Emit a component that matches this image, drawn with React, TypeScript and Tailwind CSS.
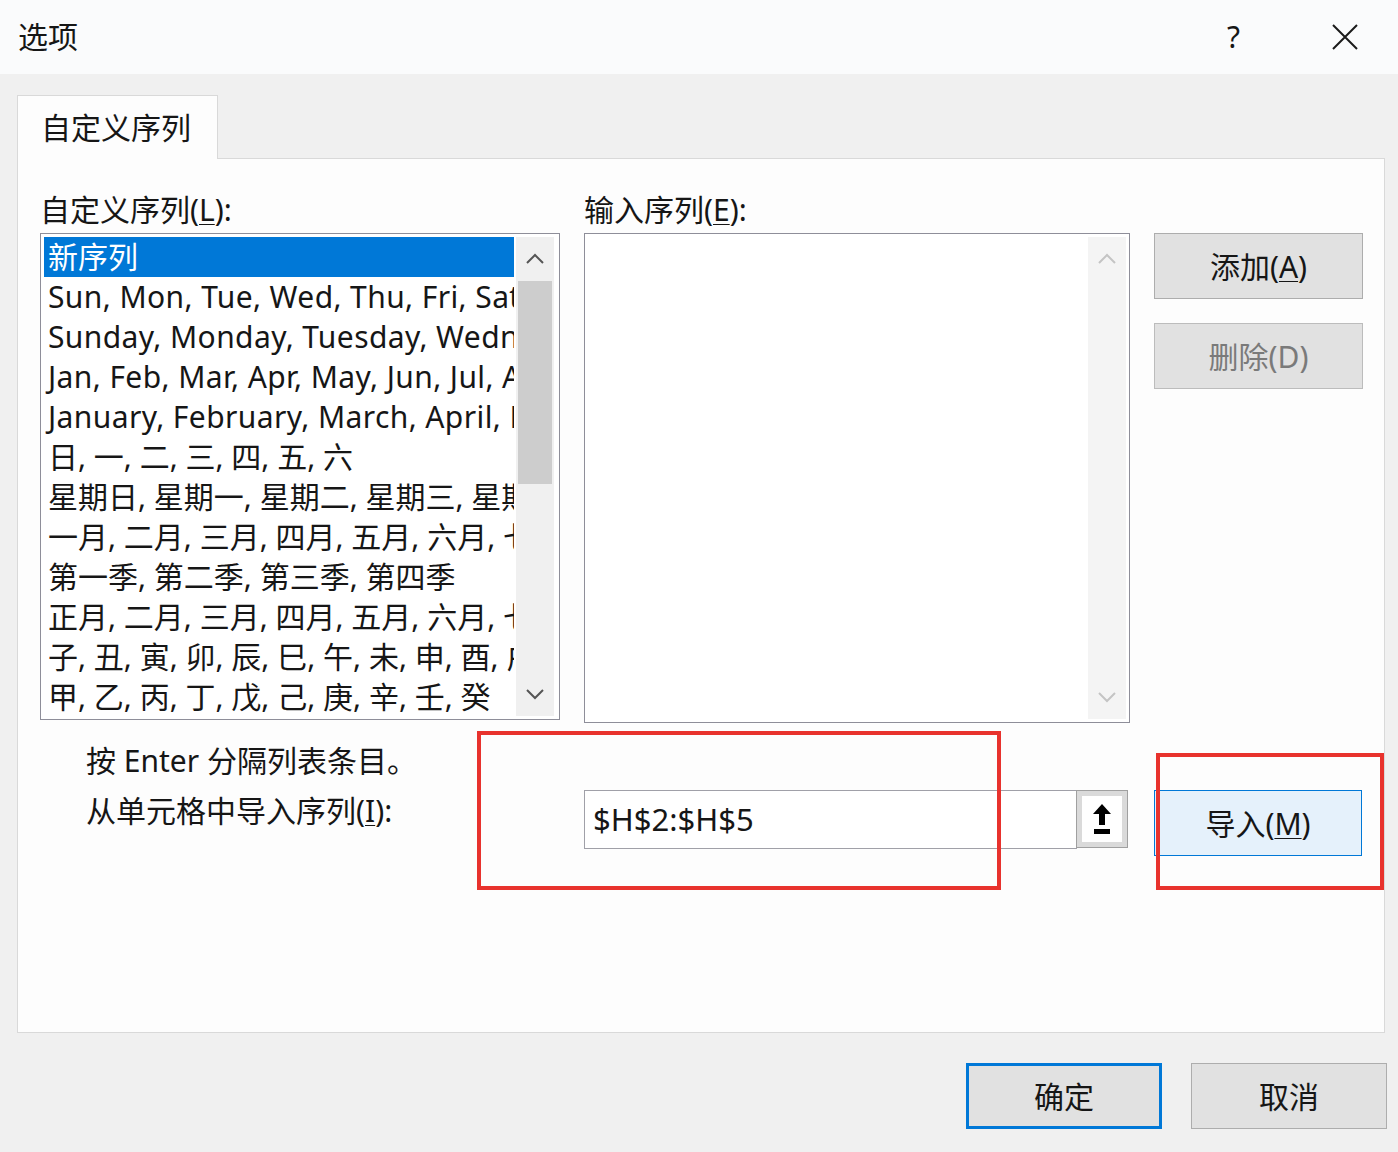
import React from "react";

const FONT = {
  fontFamily: '"Noto Sans", "Noto Sans CJK SC", sans-serif',
};

const SERIES = [
  "Sun, Mon, Tue, Wed, Thu, Fri, Sat",
  "Sunday, Monday, Tuesday, Wednesday, Thursday, Friday, Saturday",
  "Jan, Feb, Mar, Apr, May, Jun, Jul, Aug, Sep, Oct, Nov, Dec",
  "January, February, March, April, May, June, July",
  "日, 一, 二, 三, 四, 五, 六",
  "星期日, 星期一, 星期二, 星期三, 星期四, 星期五, 星期六",
  "一月, 二月, 三月, 四月, 五月, 六月, 七月, 八月",
  "第一季, 第二季, 第三季, 第四季",
  "正月, 二月, 三月, 四月, 五月, 六月, 七月, 八月",
  "子, 丑, 寅, 卯, 辰, 巳, 午, 未, 申, 酉, 戌, 亥",
  "甲, 乙, 丙, 丁, 戊, 己, 庚, 辛, 壬, 癸",
];

function Chevron({ up, color }: { up?: boolean; color: string }) {
  return (
    <svg width="20" height="12" viewBox="0 0 20 12" fill="none">
      <path
        d={up ? "M2 10 L10 2 L18 10" : "M2 2 L10 10 L18 2"}
        stroke={color}
        strokeWidth="2"
      />
    </svg>
  );
}

function Mn({ children }: { children: React.ReactNode }) {
  return <span className="underline underline-offset-[3px] decoration-1">{children}</span>;
}

export default function App() {
  return (
    <div
      className="relative w-[1398px] h-[1152px] flex flex-col bg-[#f0f0f0] text-[#161616] overflow-hidden"
      style={FONT}
    >
      {/* 타이틀 바 */}
      <div className="h-[74px] shrink-0 bg-[#fafbfc] flex items-center pl-[18px]">
        <span className="text-[30px] leading-none">选项</span>
        <span className="ml-auto text-[30px] leading-none mr-[92px]">?</span>
        <svg width="26" height="26" viewBox="0 0 26 26" className="mr-[40px]">
          <path d="M1 1 L25 25 M25 1 L1 25" stroke="#1a1a1a" strokeWidth="2" />
        </svg>
      </div>

      {/* 본문 */}
      <div className="flex-1 pt-[21px] pl-[17px] pr-[13px] flex flex-col">
        <div className="w-[201px] h-[64px] bg-[#fdfdfd] border border-b-0 border-[#d9d9d9] flex items-center pl-[23px] text-[30px] relative z-10 -mb-px">
          自定义序列
        </div>
        <div className="h-[875px] bg-[#fdfdfd] border border-[#d9d9d9] pl-[22px] pt-[33px]">
          <div className="flex">
            {/* 왼쪽 목록 */}
            <div className="w-[520px] flex flex-col">
              <div className="h-[36px] text-[30px] leading-[36px] mb-[5px]">
                自定义序列(<Mn>L</Mn>):
              </div>
              <div className="h-[487px] border border-[#8e8e99] bg-white flex p-[3px]">
                <div className="w-[470px] overflow-hidden text-[30px] leading-[40px] whitespace-nowrap">
                  <div className="bg-[#0078d7] text-white pl-[4px]">新序列</div>
                  {SERIES.map((s, i) => (
                    <div key={s} className={i < 4 ? "pl-[4px] tracking-[0.4px]" : "pl-[4px]"}>
                      {s}
                    </div>
                  ))}
                </div>
                <div className="w-[38px] ml-[2px] flex flex-col items-center bg-[#f0f0f0]">
                  <div className="h-[44px] flex items-center justify-center">
                    <Chevron up color="#555" />
                  </div>
                  <div className="w-[34px] h-[203px] bg-[#cdcdcd]" />
                  <div className="flex-1" />
                  <div className="h-[44px] flex items-center justify-center">
                    <Chevron color="#555" />
                  </div>
                </div>
              </div>
            </div>

            {/* 입력 시퀀스 */}
            <div className="w-[546px] ml-[24px] flex flex-col">
              <div className="h-[36px] text-[30px] leading-[36px] mb-[5px]">
                输入序列(<Mn>E</Mn>):
              </div>
              <div className="h-[490px] border border-[#8e8e99] bg-white flex justify-end p-[3px]">
                <div className="w-[38px] flex flex-col items-center justify-between bg-[#f4f4f4]">
                  <div className="h-[44px] flex items-center justify-center">
                    <Chevron up color="#c4c4c4" />
                  </div>
                  <div className="h-[44px] flex items-center justify-center">
                    <Chevron color="#c4c4c4" />
                  </div>
                </div>
              </div>
            </div>

            {/* 버튼 */}
            <div className="w-[209px] ml-[24px] pt-[41px] flex flex-col gap-[24px]">
              <button className="h-[66px] bg-[#e1e1e1] border border-[#adadad] text-[30px]">
                添加(<Mn>A</Mn>)
              </button>
              <button className="h-[66px] bg-[#e1e1e1] border border-[#bcbcbc] text-[30px] text-[#7a7a7a]">
                删除(D)
              </button>
            </div>
          </div>

          <div className="flex mt-[13px]">
            <div className="w-[544px] pl-[46px] text-[30px] leading-[50px]">
              <div>按 Enter 分隔列表条目。</div>
              <div>
                从单元格中导入序列(<Mn>I</Mn>):
              </div>
            </div>
            <div className="pt-[54px] flex items-start">
              <div className="w-[493px] h-[59px] border border-[#a0a0a8] bg-white flex items-center pl-[8px] text-[31px]">
                $H$2:$H$5
              </div>
              <div className="w-[52px] h-[58px] -ml-px border border-[#a0a0a0] bg-[#dadada] p-[5px]">
                <div className="w-full h-full bg-white flex items-center justify-center">
                  <svg width="20" height="32" viewBox="0 0 20 32">
                    <path d="M10 1 L19 11 L13 11 L13 22 L7 22 L7 11 L1 11 Z" fill="#000" />
                    <rect x="2" y="26" width="16" height="5" fill="#000" />
                  </svg>
                </div>
              </div>
              <button className="ml-[26px] w-[208px] h-[66px] bg-[#e5f1fb] border border-[#0078d7] text-[30px]">
                导入(<Mn>M</Mn>)
              </button>
            </div>
          </div>
        </div>

        {/* 하단 버튼 */}
        <div className="flex justify-end gap-[29px] mt-[30px] -mr-[2px]">
          <button className="w-[196px] h-[66px] bg-[#e1e1e1] border-[3px] border-[#0078d7] text-[30px]">
            确定
          </button>
          <button className="w-[196px] h-[66px] bg-[#e1e1e1] border border-[#adadad] text-[30px]">
            取消
          </button>
        </div>
      </div>

      {/* 빨간 주석 박스 */}
      <div className="absolute left-[477px] top-[731px] w-[524px] h-[159px] border-[4px] border-[#e8322d] pointer-events-none" />
      <div className="absolute left-[1156px] top-[753px] w-[228px] h-[137px] border-[4px] border-[#e8322d] pointer-events-none" />
    </div>
  );
}
